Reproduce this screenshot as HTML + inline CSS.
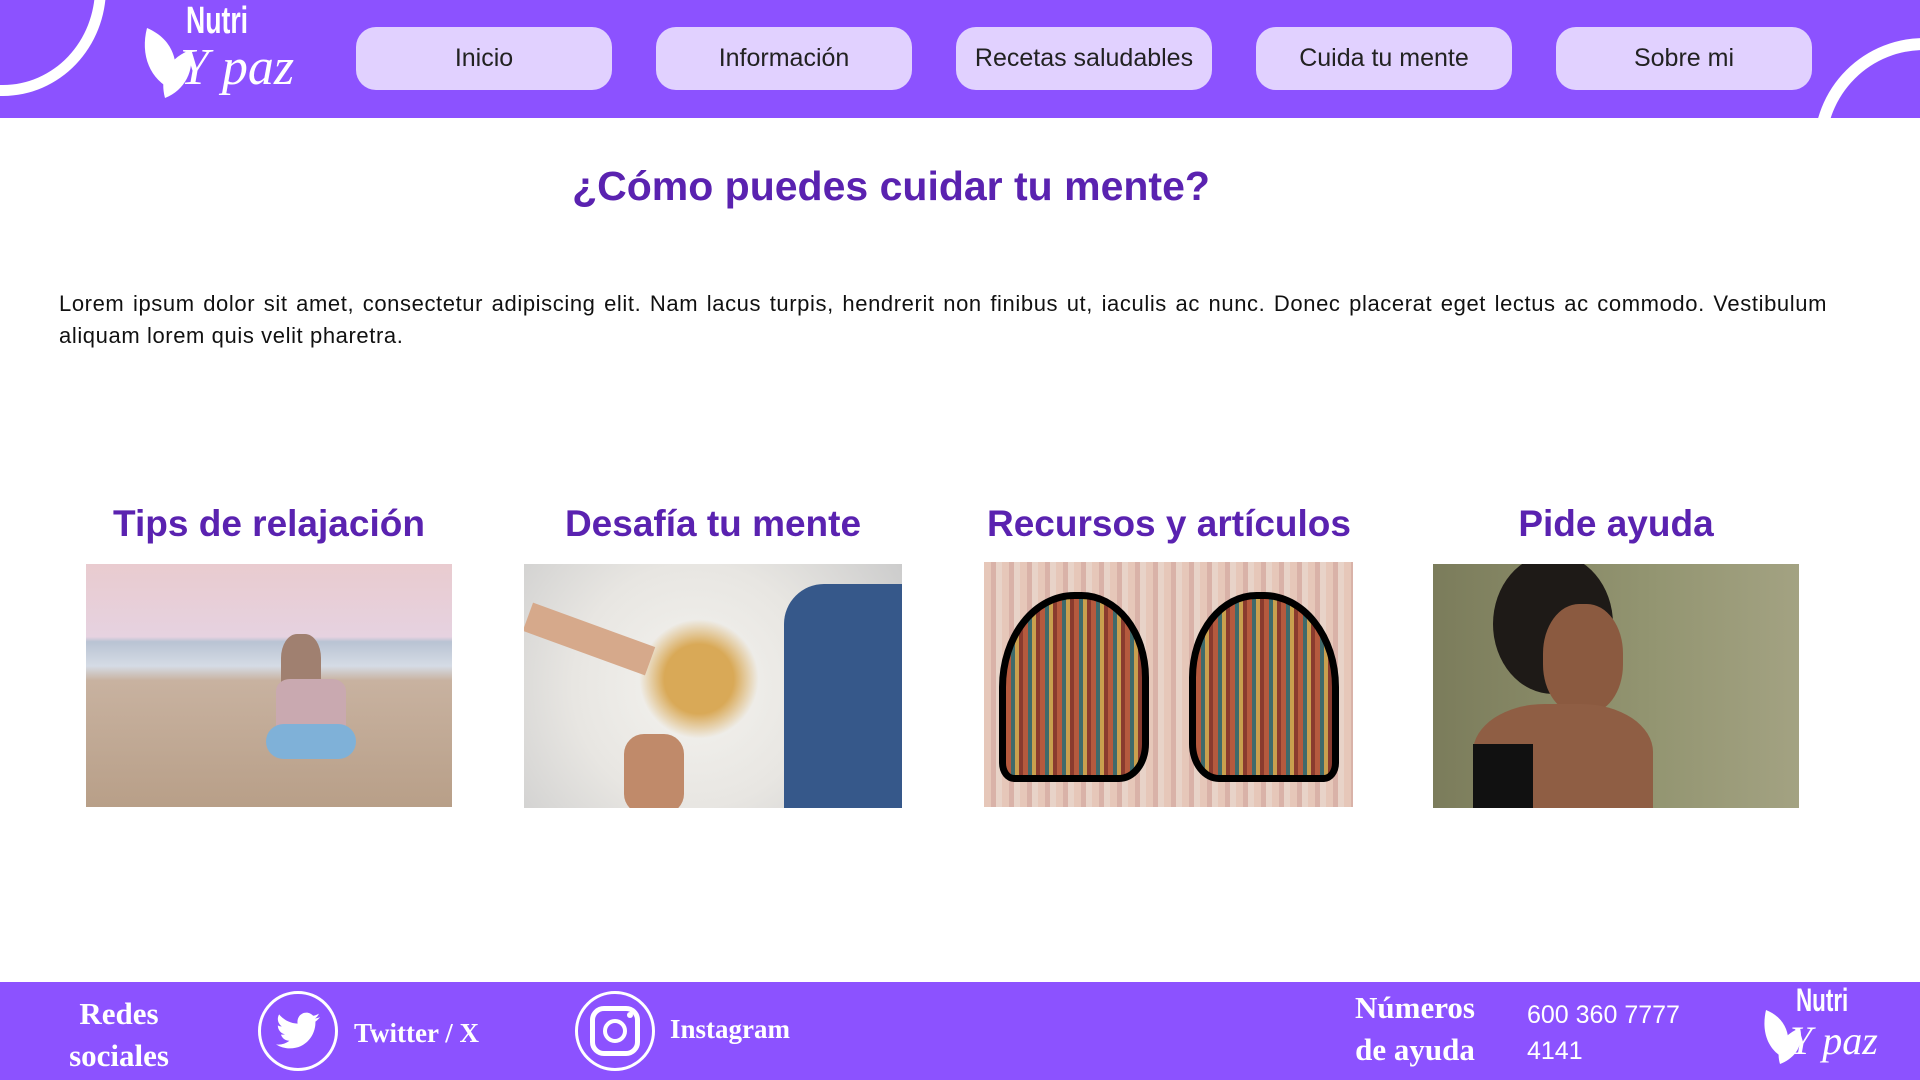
<!DOCTYPE html>
<html><head><meta charset="utf-8"><style>
*{margin:0;padding:0;box-sizing:border-box}
body{width:1920px;height:1080px;overflow:hidden;background:#fff;position:relative;font-family:"Liberation Sans",sans-serif}
.hdr{position:absolute;left:0;top:0;width:1920px;height:118px;background:#8c52ff;overflow:hidden}
.btn{position:absolute;top:27px;width:256px;height:63px;background:#e1d1ff;border-radius:20px;font-size:25px;color:#222;text-align:center;line-height:63px}
h1{position:absolute;left:0;width:1782px;top:163px;text-align:center;font-size:41px;color:#5a22b0;font-weight:bold}
p.t{position:absolute;left:59px;width:1768px;top:288px;font-size:22px;letter-spacing:0.6px;line-height:32px;color:#111;text-align:justify}
.ct{position:absolute;top:503px;font-size:37px;font-weight:bold;color:#5a22b0;text-align:center}
.img{position:absolute;overflow:hidden}
.ftr{position:absolute;left:0;top:982px;width:1920px;height:98px;background:#8c52ff;color:#fff;font-family:"Liberation Serif",serif;font-weight:bold}
</style></head><body>
<div class="hdr">
<div style="position:absolute;left:-100px;top:-120px;width:206px;height:216px;border:11px solid #fff;border-radius:50%"></div>
<div style="position:absolute;left:1814px;top:38px;width:220px;height:220px;border:12px solid #fff;border-radius:50%"></div>
<svg style="position:absolute;left:135px;top:20px" width="70" height="80"><path d="M12 8 C40 20 45 45 38 70 C15 60 5 35 12 8Z" fill="#fff"/><path d="M55 30 C30 40 25 60 30 78 C50 70 60 50 55 30Z" fill="#fff"/></svg>
<div style="position:absolute;left:186px;top:0px;font-size:38px;font-weight:bold;color:#fff;transform:scaleX(.7);transform-origin:left">Nutri</div>
<div style="position:absolute;left:180px;top:38px;font-size:52px;font-style:italic;color:#fff;font-family:'Liberation Serif',serif">Y paz</div>
<div class="btn" style="left:356px">Inicio</div>
<div class="btn" style="left:656px">Información</div>
<div class="btn" style="left:956px">Recetas saludables</div>
<div class="btn" style="left:1256px">Cuida tu mente</div>
<div class="btn" style="left:1556px">Sobre mi</div>
</div>
<h1>¿Cómo puedes cuidar tu mente?</h1>
<p class="t">Lorem ipsum dolor sit amet, consectetur adipiscing elit. Nam lacus turpis, hendrerit non finibus ut, iaculis ac nunc. Donec placerat eget lectus ac commodo. Vestibulum aliquam lorem quis velit pharetra.</p>
<div class="ct" style="left:86px;width:366px">Tips de relajación</div>
<div class="ct" style="left:524px;width:378px">Desafía tu mente</div>
<div class="ct" style="left:974px;width:390px">Recursos y artículos</div>
<div class="ct" style="left:1433px;width:366px">Pide ayuda</div>
<div class="img" style="left:86px;top:564px;width:366px;height:243px;background:linear-gradient(#e9cbcf 0%,#e6d2e0 30%,#b9c3d3 32%,#d5dbe5 42%,#c8b2a0 48%,#b89f88 100%)">
<div style="position:absolute;left:195px;top:70px;width:40px;height:60px;background:#a08070;border-radius:40% 40% 20% 20%"></div>
<div style="position:absolute;left:190px;top:115px;width:70px;height:60px;background:#c9a9b0;border-radius:20%"></div>
<div style="position:absolute;left:180px;top:160px;width:90px;height:35px;background:#7fb1d8;border-radius:20px"></div></div>
<div class="img" style="left:524px;top:564px;width:378px;height:244px;background:radial-gradient(circle at 45% 50%,#f4f3ef 0%,#e8e6e2 50%,#ccc 100%)">
<div style="position:absolute;left:260px;top:20px;width:130px;height:230px;background:#36588a;border-radius:40px 0 0 0"></div>
<div style="position:absolute;left:110px;top:40px;width:130px;height:150px;background:radial-gradient(circle,#d9a957 0 35%,transparent 60%)"></div>
<div style="position:absolute;left:0;top:60px;width:130px;height:30px;background:#d6a98b;transform:rotate(20deg)"></div>
<div style="position:absolute;left:100px;top:170px;width:60px;height:80px;background:#c08a6a;border-radius:20px"></div></div>
<div class="img" style="left:984px;top:562px;width:369px;height:245px;background:repeating-linear-gradient(90deg,#e6c7b9 0 7px,#d9b2a8 7px 12px,#e8d3c8 12px 18px)">
<div style="position:absolute;left:15px;top:30px;width:150px;height:190px;background:repeating-linear-gradient(90deg,#b55a3e 0 5px,#3f6a6b 5px 9px,#c9a04e 9px 13px,#8a3b2e 13px 17px);border:7px solid #000;border-radius:50% 45% 20% 10%"></div>
<div style="position:absolute;left:205px;top:30px;width:150px;height:190px;background:repeating-linear-gradient(90deg,#b55a3e 0 5px,#3f6a6b 5px 9px,#c9a04e 9px 13px,#8a3b2e 13px 17px);border:7px solid #000;border-radius:45% 50% 10% 20%"></div></div>
<div class="img" style="left:1433px;top:564px;width:366px;height:244px;background:linear-gradient(90deg,#7b7c5b,#939571 60%,#a3a282)">
<div style="position:absolute;left:60px;top:-10px;width:120px;height:140px;background:#1e1a17;border-radius:50%"></div>
<div style="position:absolute;left:110px;top:40px;width:80px;height:110px;background:#8b5a40;border-radius:45%"></div>
<div style="position:absolute;left:40px;top:140px;width:180px;height:120px;background:#8f5e44;border-radius:40% 40% 0 0"></div>
<div style="position:absolute;left:40px;top:180px;width:60px;height:70px;background:#111"></div></div>
<div class="ftr">
<div style="position:absolute;left:50px;top:11px;width:138px;text-align:center;font-size:31px;line-height:42px">Redes<br>sociales</div>
<div style="position:absolute;left:258px;top:9px;width:80px;height:80px;border:3px solid #fff;border-radius:50%"></div>
<svg style="position:absolute;left:276px;top:30px" width="44" height="38" viewBox="0 0 24 20"><path d="M24 2.4c-.9.4-1.8.6-2.8.8 1-.6 1.8-1.6 2.2-2.7-1 .6-2 1-3.1 1.2C19.3.7 18 0 16.6 0c-2.7 0-4.9 2.2-4.9 4.9 0 .4 0 .8.1 1.1C7.7 5.8 4.1 3.9 1.7.9c-.4.7-.7 1.6-.7 2.5 0 1.7.9 3.2 2.2 4.1-.8 0-1.6-.2-2.2-.6v.1c0 2.4 1.7 4.4 3.9 4.8-.4.1-.8.2-1.3.2-.3 0-.6 0-.9-.1.6 2 2.4 3.4 4.6 3.4-1.7 1.3-3.8 2.1-6.1 2.1-.4 0-.8 0-1.2-.1 2.2 1.4 4.8 2.2 7.5 2.2 9.1 0 14-7.5 14-14v-.6c1-.7 1.8-1.6 2.5-2.5z" fill="#fff"/></svg>
<div style="position:absolute;left:354px;top:36px;font-size:27px">Twitter / X</div>
<div style="position:absolute;left:575px;top:9px;width:80px;height:80px;border:3px solid #fff;border-radius:50%"></div>
<div style="position:absolute;left:590px;top:24px;width:50px;height:50px;border:5px solid #fff;border-radius:14px"></div>
<div style="position:absolute;left:603px;top:37px;width:24px;height:24px;border:4px solid #fff;border-radius:50%"></div>
<div style="position:absolute;left:627px;top:30px;width:6px;height:6px;background:#fff;border-radius:50%"></div>
<div style="position:absolute;left:670px;top:32px;font-size:27px">Instagram</div>
<div style="position:absolute;left:1335px;top:5px;width:160px;text-align:center;font-size:31px;line-height:42px">Números<br>de ayuda</div>
<div style="position:absolute;left:1527px;top:15px;font-family:'Liberation Sans',sans-serif;font-weight:normal;font-size:25px;line-height:36px">600 360 7777<br>4141</div>
<svg style="position:absolute;left:1758px;top:22px" width="50" height="60"><path d="M8 6 C30 15 34 35 28 55 C10 47 3 28 8 6Z" fill="#fff"/><path d="M42 24 C22 32 18 47 22 60 C38 54 46 40 42 24Z" fill="#fff"/></svg>
<div style="position:absolute;left:1796px;top:0px;font-family:'Liberation Sans',sans-serif;font-size:32px;transform:scaleX(.7);transform-origin:left">Nutri</div>
<div style="position:absolute;left:1790px;top:35px;font-size:40px;font-style:italic;font-weight:normal">Y paz</div>
</div>
</body></html>
